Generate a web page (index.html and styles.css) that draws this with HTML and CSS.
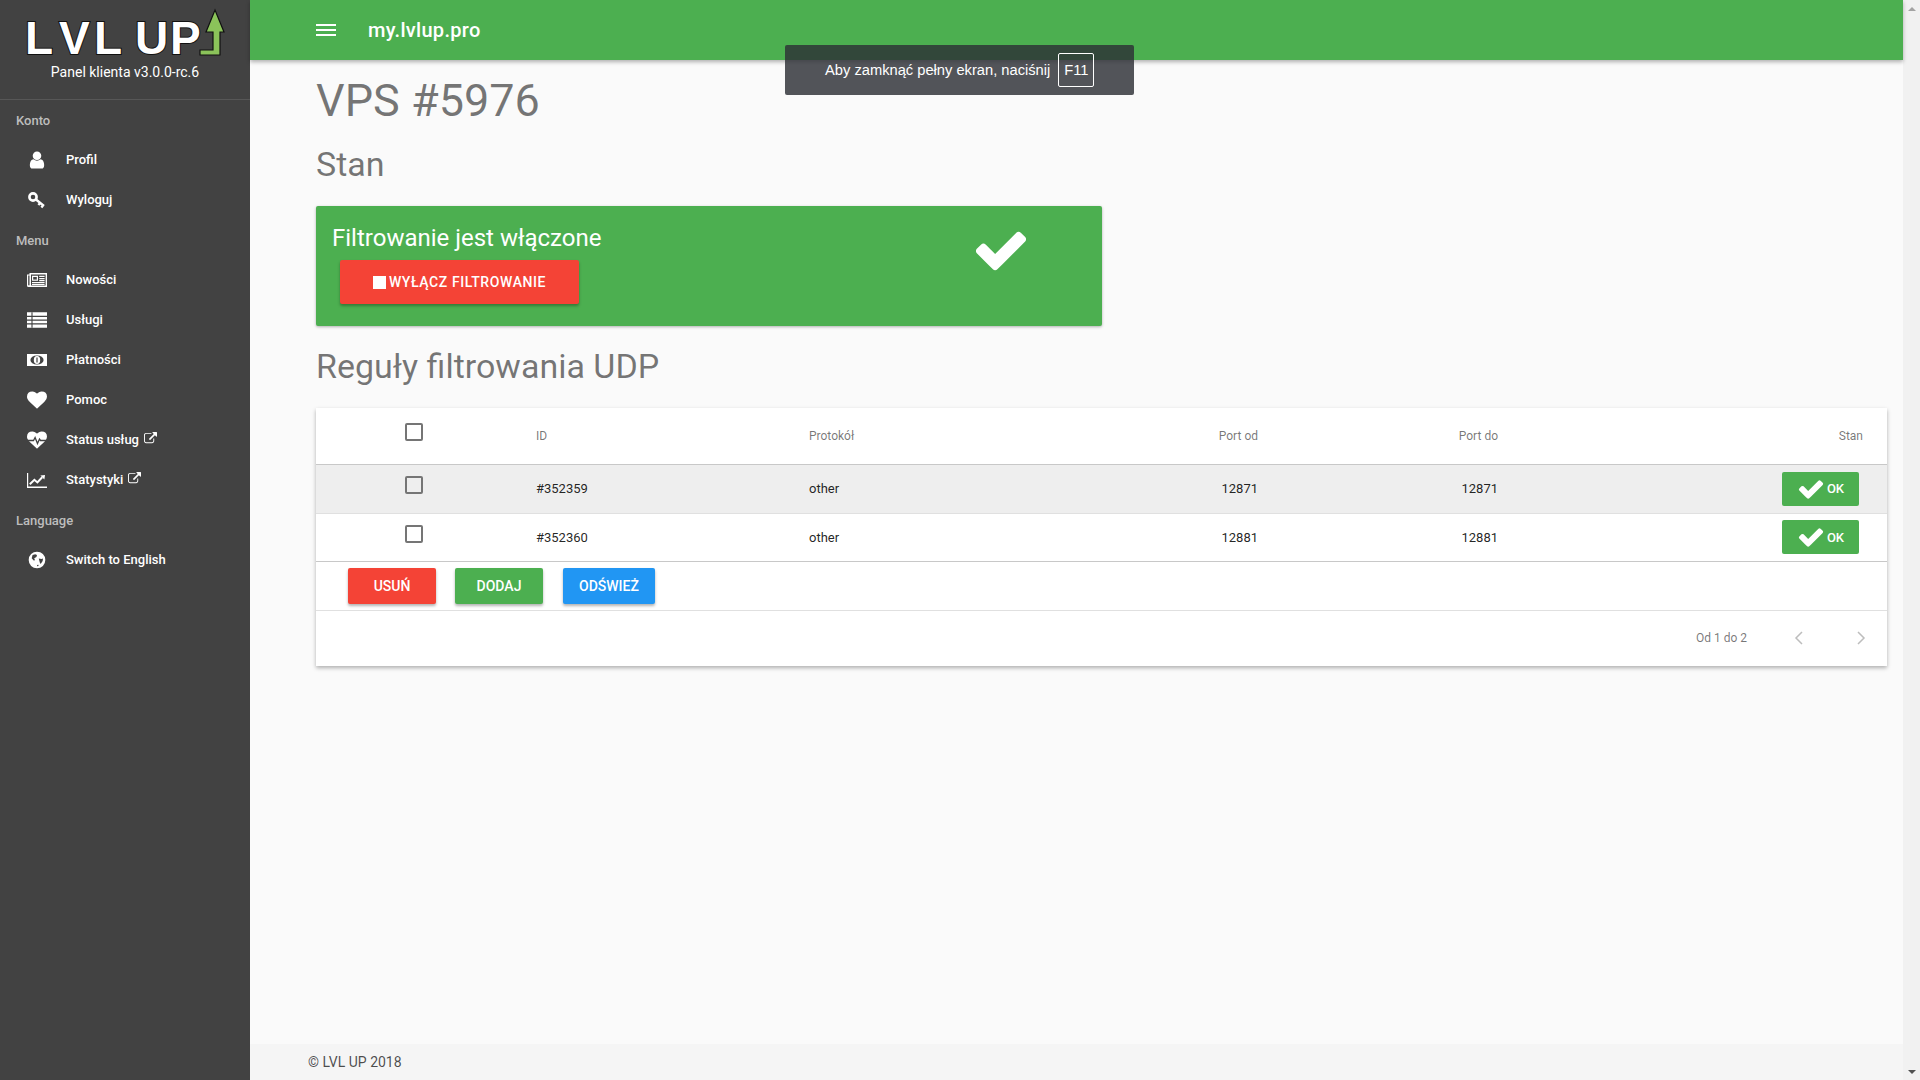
FILE: index.html
```html
<!DOCTYPE html>
<html lang="pl">
<head>
    <meta charset="UTF-8">
    <meta name="viewport" content="width=device-width, initial-scale=1.0">
    <title>VPS #5976</title>
    <link rel="stylesheet" href="styles.css">
</head>
<body>
    <svg class="sprite" xmlns="http://www.w3.org/2000/svg">
        <symbol id="i-check" viewBox="0 0 1792 1792"><path d="M1671 566q0 40-28 68l-724 724-136 136q-28 28-68 28t-68-28l-136-136-362-362q-28-28-28-68t28-68l136-136q28-28 68-28t68 28l294 295 656-657q28-28 68-28t68 28l136 136q28 28 28 68z"/></symbol>
        <symbol id="i-user" viewBox="0 0 1792 1792"><path d="M1536 1399q0 109-62.5 187t-150.5 78h-854q-88 0-150.5-78t-62.5-187q0-85 8.5-160.5t31.5-152 58.5-131 94-89 134.5-34.5q131 128 313 128t313-128q76 0 134.5 34.5t94 89 58.5 131 31.5 152 8.5 160.5zm-256-887q0 159-112.5 271.5t-271.5 112.5-271.5-112.5-112.5-271.5 112.5-271.5 271.5-112.5 271.5 112.5 112.5 271.5z"/></symbol>
        <symbol id="i-heart" viewBox="0 0 1792 1792"><path d="M896 1664q-26 0-44-18l-624-602q-10-8-27.5-26t-55.5-65.5-68-97.5-53.5-121-23.5-138q0-220 127-344t351-124q62 0 126.5 21.5t120 58 95.5 68.5 76 68q36-36 76-68t95.5-68.5 120-58 126.5-21.5q224 0 351 124t127 344q0 221-229 450l-623 600q-18 18-44 18z"/></symbol>
        <symbol id="i-ext" viewBox="0 0 1792 1792"><path d="M1408 928v320q0 119-84.5 203.5t-203.5 84.5h-832q-119 0-203.5-84.5t-84.5-203.5v-832q0-119 84.5-203.5t203.5-84.5h704q14 0 23 9t9 23v64q0 14-9 23t-23 9h-704q-66 0-113 47t-47 113v832q0 66 47 113t113 47h832q66 0 113-47t47-113v-320q0-14 9-23t23-9h64q14 0 23 9t9 23zm384-864v512q0 26-19 45t-45 19-45-19l-176-176-652 652q-10 10-23 10t-23-10l-114-114q-10-10-10-23t10-23l652-652-176-176q-19-19-19-45t19-45 45-19h512q26 0 45 19t19 45z"/></symbol>
    </svg>

    <aside class="sidebar">
        <div class="brand">
            <svg class="logo" viewBox="0 0 200 60" width="200" height="60" xmlns="http://www.w3.org/2000/svg">
                <text class="logo-text" x="0 34 69 100 110 145" y="46">LVL UP</text>
                <path d="M190 2L199 24H195V47H175V42H188V24H181Z" fill="#8bc35a" stroke="#111" stroke-width="1.2"/>
            </svg>
            <div class="version">Panel klienta v3.0.0-rc.6</div>
        </div>

        <div class="nav-title">Konto</div>
        <a class="nav-item"><svg class="nav-icon"><use href="#i-user"/></svg>Profil</a>
        <a class="nav-item">
            <svg class="nav-icon" viewBox="0 0 20 20"><circle cx="6" cy="7" r="3.6" fill="none" stroke="#fff" stroke-width="2.6"/><path d="M9 9.5l8 6.5M13 13l-1.6 2M16 15.5l-1.6 2" fill="none" stroke="#fff" stroke-width="2.3"/></svg>
            Wyloguj
        </a>

        <div class="nav-title">Menu</div>
        <a class="nav-item">
            <svg class="nav-icon" viewBox="0 0 20 16"><path d="M0 2.5h2.5V1H20v14H1.5A1.5 1.5 0 0 1 0 13.5z" fill="#fff"/><path d="M1.2 3.6h1.3v9.7H1.2zM4 2.6h14.6v11H4z" fill="#424242"/><path d="M5 3.8h6v5H5zM12.2 3.8h5.4v1.2h-5.4zM12.2 6h5.4v1.2h-5.4zM12.2 8h5.4v1.2h-5.4zM5 10h12.6v1.2H5zM5 12h12.6v1H5z" fill="#fff"/><path d="M6.2 5h3.6v2.6H6.2z" fill="#424242"/></svg>
            Nowości
        </a>
        <a class="nav-item">
            <svg class="nav-icon" viewBox="0 0 18 16"><path d="M0 1h18v3.2H0zM0 5.2h18v2.4H0zM0 8.6h18v2.4H0zM0 12h18v3H0z" fill="#fff"/><path d="M4 1h1v14H4z" fill="#424242"/></svg>
            Usługi
        </a>
        <a class="nav-item">
            <svg class="nav-icon" viewBox="0 0 20 14"><path d="M0 1h20v12H0z" fill="#fff"/><ellipse cx="10" cy="7" rx="6.6" ry="4.6" fill="#424242"/><ellipse cx="10" cy="7" rx="3.2" ry="4" fill="#fff"/><path d="M9.4 4.6h1.2v4.8H9.4z" fill="#424242"/></svg>
            Płatności
        </a>
        <a class="nav-item"><svg class="nav-icon"><use href="#i-heart"/></svg>Pomoc</a>
        <a class="nav-item">
            <svg class="nav-icon"><use href="#i-heart"/></svg>
            <svg class="pulse" viewBox="0 0 20 20"><path d="M0 10.5h6.5l1.6-3 2.4 6 2-4.4 1 1.4H20" fill="none" stroke="#424242" stroke-width="1.3"/></svg>
            Status usług<svg class="ext-icon"><use href="#i-ext"/></svg>
        </a>
        <a class="nav-item">
            <svg class="nav-icon" viewBox="0 0 20 16"><path d="M0 1h1.2v13.6H20V16H0z" fill="#fff"/><path d="M2.8 12.2l4.6-4.4 3 2.6 4.8-5.2" fill="none" stroke="#fff" stroke-width="2"/><path d="M13.4 3.6l4.6-.6-.6 4.6z" fill="#fff"/></svg>
            Statystyki<svg class="ext-icon"><use href="#i-ext"/></svg>
        </a>

        <div class="nav-title">Language</div>
        <a class="nav-item">
            <svg class="nav-icon" viewBox="0 0 18 18"><circle cx="9" cy="9" r="7.5" fill="#fff"/><path d="M5 4.4l2.4-.6 1.6.8-.5 1.6-2 1.2.7 1.8-1.2.3-1.8-2zM10.6 7.6l2.4.5 1.4-.5-.3 2.4-1.8 2.6-.8-1.4zM9 13.6l1.2-.3.2 1.1-1.2.3z" fill="#424242"/></svg>
            Switch to English
        </a>
    </aside>

    <div class="page">
        <header class="topbar">
            <div class="burger"><span></span><span></span><span></span></div>
            <div class="topbar-title">my.lvlup.pro</div>
        </header>

        <main class="content">
            <h1 class="title">VPS #5976</h1>
            <h2 class="subtitle first">Stan</h2>

            <section class="state-card">
                <div class="state-left">
                    <div class="state-text">Filtrowanie jest włączone</div>
                    <button class="btn btn-big btn-red"><span class="stop"></span>Wyłącz filtrowanie</button>
                </div>
                <div class="state-right"><svg class="state-check"><use href="#i-check"/></svg></div>
            </section>

            <h2 class="subtitle second">Reguły filtrowania UDP</h2>

            <section class="table-card">
                <table class="rules">
                    <thead>
                        <tr>
                            <th class="col-check"><span class="checkbox"></span></th>
                            <th class="col-id">ID</th>
                            <th class="col-proto">Protokół</th>
                            <th class="col-from num">Port od</th>
                            <th class="col-to num">Port do</th>
                            <th class="col-state num">Stan</th>
                        </tr>
                    </thead>
                    <tbody>
                        <tr class="selected">
                            <td><span class="checkbox"></span></td>
                            <td>#352359</td>
                            <td>other</td>
                            <td class="num">12871</td>
                            <td class="num">12871</td>
                            <td class="num"><span class="ok"><svg class="ok-icon"><use href="#i-check"/></svg>OK</span></td>
                        </tr>
                        <tr>
                            <td><span class="checkbox"></span></td>
                            <td>#352360</td>
                            <td>other</td>
                            <td class="num">12881</td>
                            <td class="num">12881</td>
                            <td class="num"><span class="ok"><svg class="ok-icon"><use href="#i-check"/></svg>OK</span></td>
                        </tr>
                    </tbody>
                </table>

                <div class="actions">
                    <button class="btn btn-red">Usuń</button>
                    <button class="btn btn-green">Dodaj</button>
                    <button class="btn btn-blue">Odśwież</button>
                </div>

                <div class="pager">
                    <span class="pager-text">Od 1 do 2</span>
                    <svg class="pager-arrow" viewBox="0 0 10 16"><path d="M8 2L2 8l6 6" fill="none" stroke="#bdbdbd" stroke-width="1.5"/></svg>
                    <svg class="pager-arrow" viewBox="0 0 10 16"><path d="M2 2l6 6-6 6" fill="none" stroke="#bdbdbd" stroke-width="1.5"/></svg>
                </div>
            </section>
        </main>

        <footer class="footer">© LVL UP 2018</footer>
    </div>

    <div class="scrollbar">
        <span class="arrow-up"></span>
        <span class="arrow-down"></span>
    </div>

    <div class="fs-toast">Aby zamknąć pełny ekran, naciśnij <span class="fs-key">F11</span></div>
</body>
</html>
```

FILE: styles.css
```css
* {
    box-sizing: border-box;
    margin: 0;
    padding: 0;
}

html, body {
    height: 100%;
    overflow: hidden;
}

body {
    display: flex;
    background: #fafafa;
    color: rgba(0, 0, 0, 0.87);
    font-family: Roboto, 'Liberation Sans', sans-serif;
    font-size: 14px;
}

.sprite {
    display: none;
}

/* sidebar */
.sidebar {
    width: 250px;
    flex-shrink: 0;
    background: #424242;
    color: #fff;
}

.brand {
    height: 100px;
    border-bottom: 1px solid #575757;
    padding-top: 8px;
    text-align: center;
}

.logo {
    display: block;
    margin-left: 25px;
}

.logo-text {
    font-family: 'Liberation Sans', sans-serif;
    font-size: 46px;
    font-weight: 700;
    fill: #fff;
    stroke: #111;
    stroke-width: 2px;
    paint-order: stroke;
}

.version {
    font-size: 14px;
    margin-top: -4px;
}

.nav-title {
    height: 40px;
    line-height: 42px;
    padding-left: 16px;
    color: #bdbdbd;
    font-size: 13px;
    font-weight: 500;
}

.nav-item {
    position: relative;
    display: flex;
    align-items: center;
    height: 40px;
    padding-left: 27px;
    padding-bottom: 1px;
    font-size: 13px;
    font-weight: 500;
}

.nav-icon {
    width: 20px;
    height: 20px;
    margin-right: 19px;
    fill: #fff;
    flex-shrink: 0;
}

.pulse {
    position: absolute;
    left: 27px;
    top: 10px;
    width: 20px;
    height: 20px;
}

.ext-icon {
    width: 13px;
    height: 13px;
    margin: -3px 0 0 5px;
    fill: #fff;
}

/* main column */
.page {
    flex: 1;
    min-width: 0;
    display: flex;
    flex-direction: column;
}

.topbar {
    position: relative;
    z-index: 2;
    height: 60px;
    flex-shrink: 0;
    display: flex;
    align-items: center;
    padding-left: 66px;
    background: #4caf50;
    color: #fff;
    box-shadow: 0 2px 4px rgba(0, 0, 0, 0.3);
}

.burger {
    width: 20px;
    margin-right: 32px;
}

.burger span {
    display: block;
    height: 2px;
    background: #fff;
    margin: 3px 0;
}

.topbar-title {
    font-size: 20px;
    font-weight: 500;
    letter-spacing: 0.3px;
}

.content {
    flex: 1;
    padding: 17px 16px 0 66px;
}

.title {
    font-size: 45px;
    font-weight: 400;
    line-height: 48px;
    color: rgba(0, 0, 0, 0.54);
}

.subtitle {
    font-size: 34px;
    font-weight: 400;
    line-height: 40px;
    color: rgba(0, 0, 0, 0.54);
}

.subtitle.first {
    margin-top: 19px;
}

.subtitle.second {
    margin-top: 20px;
}

.state-card {
    display: flex;
    width: 786px;
    height: 120px;
    margin-top: 22px;
    border-radius: 2px;
    background: #4caf50;
    color: #fff;
    box-shadow: 0 1px 3px rgba(0, 0, 0, 0.3);
}

.state-left {
    flex: 1;
    padding: 16px;
}

.state-text {
    font-size: 24px;
    line-height: 32px;
}

.state-right {
    width: 202px;
    display: flex;
    justify-content: center;
    padding-top: 15px;
}

.state-check {
    width: 58px;
    height: 58px;
    fill: #fff;
}

.btn {
    min-width: 88px;
    height: 36px;
    padding: 0 16px;
    border: none;
    border-radius: 2px;
    color: #fff;
    font-family: Roboto, sans-serif;
    font-size: 14px;
    font-weight: 500;
    text-transform: uppercase;
    box-shadow: 0 2px 3px rgba(0, 0, 0, 0.3);
}

.btn-big {
    display: flex;
    align-items: center;
    justify-content: center;
    width: 239px;
    height: 44px;
    margin: 6px 0 0 8px;
    letter-spacing: 0.6px;
}

.btn-red {
    background: #f44336;
}

.btn-green {
    background: #4caf50;
}

.btn-blue {
    background: #2196f3;
    margin-left: 1px;
}

.stop {
    width: 13px;
    height: 13px;
    margin-right: 3px;
    background: #fff;
}

/* rules table */
.table-card {
    margin-top: 22px;
    background: #fff;
    box-shadow: 0 2px 4px rgba(0, 0, 0, 0.3);
}

.rules {
    width: 100%;
    table-layout: fixed;
    border-collapse: collapse;
    font-size: 13px;
}

.rules th {
    height: 56px;
    border-bottom: 1px solid #c8c8c8;
    color: rgba(0, 0, 0, 0.54);
    font-size: 12px;
    font-weight: 400;
    text-align: left;
    padding: 0 24px;
}

.rules td {
    height: 48px;
    border-bottom: 1px solid #e0e0e0;
    padding: 0 24px;
}

.rules .selected td {
    height: 49px;
}

.rules tbody tr:last-child td {
    border-bottom-color: #c8c8c8;
}

.rules .selected {
    background: #eee;
}

.rules .num {
    text-align: right;
}

.col-check {
    width: 196px;
}

.col-id {
    width: 273px;
}

.col-proto {
    width: 255px;
}

.col-from {
    width: 242px;
}

.col-to {
    width: 240px;
}

.rules th:first-child,
.rules td:first-child {
    text-align: center;
    padding: 0;
}

.checkbox {
    display: inline-block;
    width: 18px;
    height: 18px;
    border: 2px solid #757575;
    border-radius: 2px;
    vertical-align: 4px;
}

.ok {
    display: inline-flex;
    align-items: center;
    justify-content: center;
    width: 77px;
    height: 34px;
    margin-right: 4px;
    border-radius: 2px;
    background: #4caf50;
    color: #fff;
    font-size: 13px;
    font-weight: 500;
}

.ok-icon {
    width: 28px;
    height: 28px;
    margin-right: 2px;
    fill: #fff;
}

.actions {
    display: flex;
    gap: 19px;
    height: 49px;
    padding: 6px 0 0 32px;
    border-bottom: 1px solid #e0e0e0;
}

.pager {
    display: flex;
    align-items: center;
    justify-content: flex-end;
    height: 55px;
    padding-right: 21px;
    color: rgba(0, 0, 0, 0.54);
    font-size: 12px;
}

.pager-text {
    margin-right: 47px;
}

.pager-arrow {
    width: 10px;
    height: 16px;
}

.pager-arrow + .pager-arrow {
    margin-left: 52px;
}

.footer {
    height: 36px;
    line-height: 36px;
    padding-left: 58px;
    background: #f5f5f5;
    font-size: 14px;
    color: rgba(0, 0, 0, 0.7);
}

/* fake browser scrollbar */
.scrollbar {
    width: 17px;
    flex-shrink: 0;
    display: flex;
    flex-direction: column;
    justify-content: space-between;
    align-items: center;
    padding: 7px 0 6px;
    background: #f1f1f1;
}

.arrow-up,
.arrow-down {
    width: 0;
    height: 0;
    border-left: 4px solid transparent;
    border-right: 4px solid transparent;
}

.arrow-up {
    border-bottom: 4px solid #a3a3a3;
}

.arrow-down {
    border-top: 4px solid #505050;
}

/* browser fullscreen message */
.fs-toast {
    position: absolute;
    left: 785px;
    top: 45px;
    z-index: 5;
    display: flex;
    align-items: center;
    gap: 8px;
    width: 349px;
    height: 50px;
    padding: 0 0 0 40px;
    border-radius: 2px;
    background: rgba(45, 48, 54, 0.82);
    color: #fff;
    font-family: 'Liberation Sans', Arial, sans-serif;
    font-size: 14.7px;
}

.fs-key {
    display: flex;
    align-items: center;
    justify-content: center;
    width: 36px;
    height: 34px;
    border: 1px solid #fff;
    border-radius: 2px;
}
```
